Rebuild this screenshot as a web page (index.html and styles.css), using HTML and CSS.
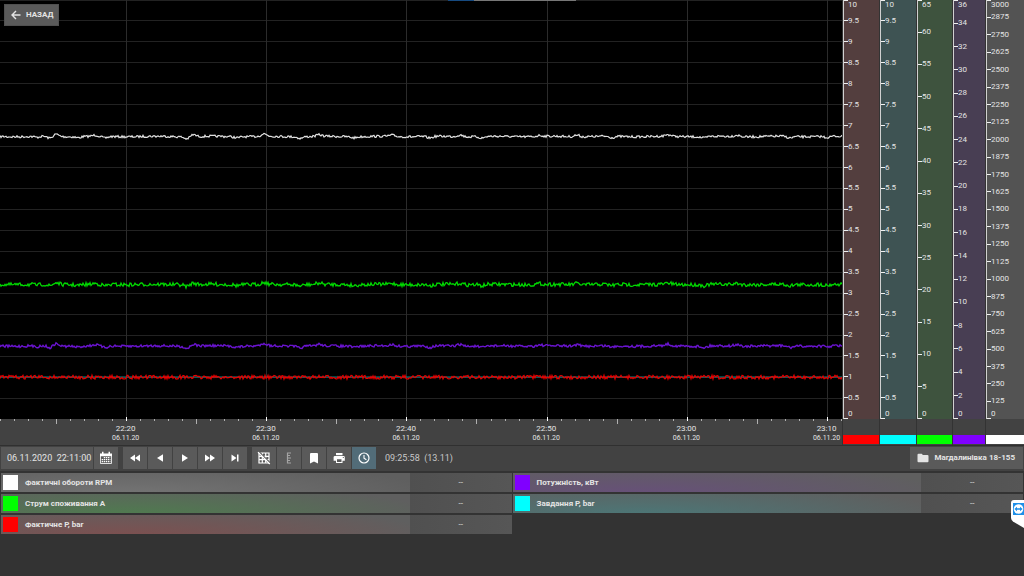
FILE: index.html
```html
<!DOCTYPE html>
<html lang="uk">
<head>
<meta charset="utf-8">
<title>Магдалинівка 18-155</title>
<link rel="stylesheet" href="styles.css">
</head>
<body>
<main class="trend">
  <section class="plot">
    <div class="plot-main">
      <svg class="canvas" id="canvas" viewBox="0 0 842 419" preserveAspectRatio="none" role="img" aria-label="Графік"></svg>
      <div class="time-axis">
        <svg class="ticks" id="ticks" viewBox="0 0 842 8" preserveAspectRatio="none" aria-hidden="true"></svg>
        <ol class="times" id="times"></ol>
      </div>
    </div>
    <div class="scales" id="scales"></div>
    <button class="back" type="button">
      <svg viewBox="0 0 10 10" aria-hidden="true"><path d="M9.500 5H1.200M5 .9L1 5L5 9.100" fill="none" stroke="currentColor" stroke-width="1.400"/></svg>
      НАЗАД
    </button>
    <div class="top-tab"></div>
  </section>

  <div class="toolbar">
    <div class="group">
      <input class="datetime" type="text" aria-label="Дата і час" value="06.11.2020  22:11:00">
      <button class="tool" type="button" aria-label="Календар">
        <svg viewBox="0 0 14 14"><path d="M1 2.500h12v2.700H1zM3 .8h1.500v2H3zM9.500.8H11v2H9.500z" fill="currentColor"/><path d="M1.500 4.500v8h11v-8" fill="none" stroke="currentColor" stroke-opacity=".8"/><path d="M4.800 6.600h6.500M2.700 8.600h8.800M2.700 10.600h8.800" stroke="currentColor" stroke-width="1.300" stroke-dasharray="1.400 .7"/></svg>
      </button>
    </div>
    <div class="group">
      <button class="tool" type="button" aria-label="Швидко назад"><svg viewBox="0 0 14 14"><path d="M7 3.5v7L2 7zM12 3.5v7L7 7z" fill="currentColor"/></svg></button>
      <button class="tool" type="button" aria-label="Назад"><svg viewBox="0 0 14 14"><path d="M10 3.2v7.6L4 7z" fill="currentColor"/></svg></button>
      <button class="tool" type="button" aria-label="Вперед"><svg viewBox="0 0 14 14"><path d="M4 3.2v7.6L10 7z" fill="currentColor"/></svg></button>
      <button class="tool" type="button" aria-label="Швидко вперед"><svg viewBox="0 0 14 14"><path d="M2 3.5v7L7 7zM7 3.5v7L12 7z" fill="currentColor"/></svg></button>
      <button class="tool" type="button" aria-label="У кінець"><svg viewBox="0 0 14 14"><path d="M3.5 3.5v7L8.5 7zM9 3.5h1.5v7H9z" fill="currentColor"/></svg></button>
    </div>
    <div class="group">
      <button class="tool" type="button" aria-label="Сітка"><svg viewBox="0 0 14 14"><path d="M2 2h10v10H2zM5.3 2v10M8.7 2v10M2 5.3h10M2 8.7h10" fill="none" stroke="currentColor" stroke-width="1.2"/><path d="M2.2 .8L13.2 11.8" stroke="#5a5a5a" stroke-width="1.2"/><path d="M1 1.2L12.8 13" stroke="currentColor" stroke-width="1.2"/></svg></button>
      <button class="tool dim" type="button" aria-label="Шкали"><svg viewBox="0 0 14 14"><path d="M5.5 1.5v11M5.5 2H9M5.5 4.5H8M5.5 7H9M5.5 9.5H8M5.5 12H9" fill="none" stroke="currentColor" stroke-width="1.2"/></svg></button>
      <button class="tool" type="button" aria-label="Закладка"><svg viewBox="0 0 14 14"><path d="M3 3q0-1 1-1h6q1 0 1 1v9.400L7 10.600l-4 1.800z" fill="currentColor"/></svg></button>
      <button class="tool" type="button" aria-label="Друк"><svg viewBox="0 0 14 14"><path d="M4 2h6.5v2.2H4z" fill="currentColor"/><path fill-rule="evenodd" d="M3 4.9h8.4q1.4 0 1.4 1.4v3.5h-2.3V12H4V9.8H1.6V6.3Q1.6 4.9 3 4.9zM5 8.2V11h4.5V8.2zM10.8 6.1v1h1v-1z" fill="currentColor"/></svg></button>
      <button class="tool active" type="button" aria-label="Поточний час"><svg viewBox="0 0 14 14"><path d="M7 3.9V7.2L9.4 8.7" fill="none" stroke="currentColor" stroke-width="1.1"/><circle cx="7" cy="7" r="5" fill="none" stroke="currentColor" stroke-width="1.2"/></svg></button>
    </div>
    <output class="clock">09:25:58&nbsp; (13.11)</output>
    <button class="station" type="button">
      <svg viewBox="0 0 12 10" aria-hidden="true"><path d="M.5 1.8Q.5.8 1.5.8h3.2l1.2 1.3h4.6q1 0 1 1v5.2q0 1-1 1h-9q-1 0-1-1z" fill="currentColor"/></svg>
      Магдалинівка 18-155
    </button>
  </div>

  <section class="legend">
    <ul class="series">
      <li class="row white"><span class="swatch"></span><span class="name">Фактичні обороти RPM</span><span class="value">--</span></li>
      <li class="row green"><span class="swatch"></span><span class="name">Струм споживання А</span><span class="value">--</span></li>
      <li class="row red"><span class="swatch"></span><span class="name">Фактичне P, bar</span><span class="value">--</span></li>
    </ul>
    <ul class="series">
      <li class="row violet"><span class="swatch"></span><span class="name">Потужність, кВт</span><span class="value">--</span></li>
      <li class="row cyan"><span class="swatch"></span><span class="name">Завдання P, bar</span><span class="value">--</span></li>
    </ul>
    <svg class="side-tab" viewBox="0 0 13 28" aria-hidden="true">
      <path d="M13 0H3Q0 0 0 3v15q0 2 2 3.400L13 28z" fill="#fff"/>
      <path d="M2 3h11v12H2z" fill="#1e8fe8"/>
      <circle cx="7.500" cy="9" r="4.800" fill="#fff"/>
      <path d="M3.400 9L6 6.800v1.400h3V6.800L11.600 9L9 11.200V9.800H6v1.400z" fill="#1e8fe8"/>
    </svg>
  </section>
</main>
<script src="chart.js"></script>
</body>
</html>
```

FILE: styles.css
```css
* { box-sizing: border-box; }

body {
  margin: 0;
  background: #333;
  color: #e4e4e4;
  font: 8px/10px Roboto, "Noto Sans", sans-serif;
}

ul, ol { margin: 0; padding: 0; list-style: none; }

button, input { font: inherit; color: inherit; border: 0; margin: 0; padding: 0; }

.trend { display: flex; flex-direction: column; min-height: 100vh; overflow: hidden; }

/* Plot */
.plot { position: relative; flex: 1; display: flex; min-height: 300px; border-bottom: 1px solid #303030; }
.plot-main { flex: 1; min-width: 0; display: flex; flex-direction: column; background: #424242; }
.canvas { display: block; flex: 1; width: 100%; min-height: 0; background: #000; }
.canvas polyline { fill: none; }
.time-axis { flex: none; height: 26px; position: relative; }
.ticks { position: absolute; top: -2px; left: 0; width: 100%; height: 8px; }
.times { display: flex; padding-top: 5px; margin-left: 6.6%; width: 100%; }
.times li { flex: 0 0 16.65%; display: flex; flex-direction: column; align-items: center; }
.times small { font-size: 7px; line-height: 9px; }

.scales { display: grid; grid-template-columns: 37px 37px 36px 33px 39px; background: #333; }
.scale { display: flex; flex-direction: column; margin-left: 1px; background: #424242; }
.scale-body { flex: 1; display: flex; flex-direction: column; justify-content: space-between; border-left: 1px solid #d0d0d0; }
.scale-body li { height: 0; display: flex; align-items: center; }
.scale-body li::before { content: ""; flex: none; width: 4px; height: 1px; background: #f0f0f0; }
.scale-body li:first-child { align-items: flex-start; }
.scale-body li:last-child { align-items: flex-end; }
.scale-chip { height: 9px; margin: 16px 0 1px; }
.scale.red .scale-body { background: #533e3e; }
.scale.cyan .scale-body { background: #3e5353; }
.scale.green .scale-body { background: #3e533e; }
.scale.violet .scale-body { background: #483e53; }
.scale.white .scale-body { background: #535353; }

.red { --c: #f00; --tint: #7d5050; }
.cyan { --c: #0ff; --tint: #4c7777; }
.green { --c: #0f0; --tint: #4f7b4f; }
.violet { --c: #8000ff; --tint: #675079; }
.white { --c: #fff; --tint: #747474; }
.scale-chip, .swatch { background: var(--c); }

.back {
  position: absolute; top: 4px; left: 4px;
  display: flex; align-items: center; gap: 5px;
  height: 22px; padding: 0 5px 0 6px;
  background: #5a5a5a; border: 1px solid #505050;
  font-weight: 700;
}
.back svg { width: 10px; height: 10px; }
.top-tab {
  position: absolute; top: 0; left: 448px; width: 128px; height: 1px;
  background: linear-gradient(90deg, #164a80 20%, #777 20%);
}

/* Toolbar */
.toolbar { display: flex; gap: 5px; height: 27px; padding: 1px 1px 2px; background: #424242; border-bottom: 2px solid #333; }
.group { display: flex; gap: 1px; }
.datetime { width: 92px; padding: 0 0 0 6px; background: #575757; font-size: 9px; }
.tool { display: grid; place-items: center; width: 24px; background: #5a5a5a; color: #fff; }
.tool svg { width: 14px; height: 14px; }
.tool.dim { color: #a4a4a4; }
.tool.active { background: #526c78; }
.clock { align-self: center; padding-left: 4px; font-size: 9px; color: #c8c8c8; }
.station {
  margin-left: auto; display: flex; align-items: center; gap: 5px;
  padding: 0 8px 0 7px; background: #5a5a5a; font-weight: 700;
}
.station svg { width: 12px; height: 10px; }

/* Legend */
.legend { position: relative; flex: none; display: grid; grid-template-columns: 1fr 1fr; gap: 1px; min-height: 103px; padding: 0 1px; }
.series { display: flex; flex-direction: column; gap: 2px; }
.row {
  display: grid; grid-template-columns: 16px 1fr 20%; gap: 6px; align-items: center;
  height: 19px; padding-left: 2px;
  background:
    linear-gradient(90deg, transparent 80%, #505050 80%, #565656),
    radial-gradient(ellipse 60% 170% at 25% 110%, var(--tint), #5f5f5f);
}
.swatch { width: 15px; height: 15px; }
.name { font-weight: 700; }
.value { text-align: center; }
.side-tab { position: absolute; right: 0; top: 27px; width: 13px; height: 28px; }
```

FILE: chart.js
```js
const W = 842, H = 419;
const MAJOR = 140.2, FIRST = 126.5;
const byId = id => document.getElementById(id);

// Grid lines
let grid = '';
for (let i = 0; i < 20; i++) {
  const y = Math.floor(i * H / 20);
  grid += `<path d="M0 ${y + 0.5}H${W}" stroke="#222"/>`;
}
for (let i = 0; i < 6; i++) {
  const x = Math.floor(FIRST + i * MAJOR);
  grid += `<path d="M${x + 0.5} 0V${H}" stroke="#2b2b2b"/>`;
}

// Repeatable noise
let seed = 7;
const rnd = () => (seed = (seed * 16807) % 2147483647) / 2147483647;

const bumps = [[37, 1], [50, 2], [56, -2.4], [78, 1], [95, -1], [105, 1.8], [187, 2.2], [193, -2],
  [237, 1], [264, -2.4], [300, 1.5], [319, -1.5], [354, 1], [392, -1.2], [430, 1.6], [460, -1.8],
  [482, 1.6], [540, -1], [577, -1.6], [612, 1.4], [668, -1.6], [704, 1.4], [737, -1.4], [790, 1.5], [827, 1.2]];
const wave = [];
for (let x = 0; x <= W; x++) {
  let v = 0.3 * Math.sin(x / 9);
  for (const [p, a] of bumps) v += a * Math.exp(-((x - p) ** 2) / 14);
  wave.push(v);
}

function trace(color, base, follow, noise, width) {
  const pts = [];
  for (let x = 0; x <= W; x += 1) pts.push(`${x},${(base + wave[x] * follow + (rnd() - 0.5) * noise).toFixed(1)}`);
  return `<polyline points="${pts.join(' ')}" stroke="${color}" stroke-width="${width}"/>`;
}

byId('canvas').innerHTML = grid +
  trace('#e0e0e0', 136.5, 1, 2.2, 1.2) +
  trace('#00d800', 284.5, 0.8, 3.6, 1.3) +
  trace('#6a14d0', 346, 1, 2.4, 1.4) +
  `<path d="M0 377H${W}" stroke="#009090"/>` +
  trace('#e80000', 377.2, 0, 3.8, 1.2);

// Time axis: a tick each minute, a label every ten
let marks = '';
for (let i = -9; i <= 51; i++) {
  const x = Math.floor(FIRST + i * MAJOR / 10) + 0.5;
  const major = i % 10 === 0, mid = i % 5 === 0;
  marks += `<path d="M${x} ${major ? 0 : 2}V${major ? 4 : mid ? 7 : 4}" stroke="${major ? '#fff' : '#b0b0b0'}"/>`;
}
byId('ticks').innerHTML = marks;
byId('times').innerHTML = ['22:20', '22:30', '22:40', '22:50', '23:00', '23:10']
  .map(t => `<li><span>${t}</span><small>06.11.20</small></li>`).join('');

// Value scales
const scales = [['red', 10, 0.5], ['cyan', 10, 0.5], ['green', 65, 5], ['violet', 36, 2], ['white', 3000, 125]];
byId('scales').innerHTML = scales.map(([name, max, step]) => {
  let items = '';
  for (let v = max; v >= 0; v -= step) items += `<li>${v}</li>`;
  return `<div class="scale ${name}"><ol class="scale-body">${items}</ol><div class="scale-chip"></div></div>`;
}).join('');
```
